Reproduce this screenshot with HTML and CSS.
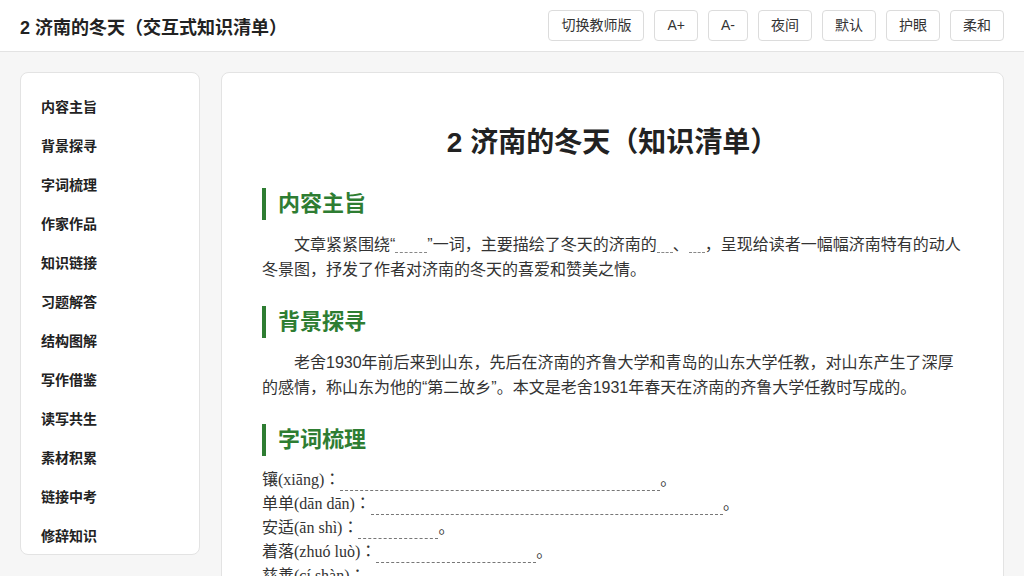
FILE: index.html
```html
<!DOCTYPE html>
<html lang="ja">
<head>
  <meta charset="UTF-8" />
  <meta name="viewport" content="width=device-width, initial-scale=1.0"/>
  <title>2 济南的冬天（交互式知识清单）</title>
  <link rel="stylesheet" href="styles.css">
</head>
<body>

<header class="topbar">
  <h1 class="page-title">2 济南的冬天（交互式知识清单）</h1>
  <div class="tools">
    <button class="tool-btn">切换教师版</button>
    <button class="tool-btn">A+</button>
    <button class="tool-btn">A-</button>
    <button class="tool-btn">夜间</button>
    <button class="tool-btn">默认</button>
    <button class="tool-btn">护眼</button>
    <button class="tool-btn">柔和</button>
  </div>
</header>

<div class="layout">
  <nav class="sidebar">
    <a href="#zhuzhi">内容主旨</a>
    <a href="#beijing">背景探寻</a>
    <a href="#zici">字词梳理</a>
    <a href="#">作家作品</a>
    <a href="#">知识链接</a>
    <a href="#">习题解答</a>
    <a href="#">结构图解</a>
    <a href="#">写作借鉴</a>
    <a href="#">读写共生</a>
    <a href="#">素材积累</a>
    <a href="#">链接中考</a>
    <a href="#">修辞知识</a>
  </nav>

  <main class="content">
    <h1 class="doc-title">2 济南的冬天（知识清单）</h1>

    <h2 id="zhuzhi" class="section-title">内容主旨</h2>
    <p class="text">文章紧紧围绕“<span class="gap gap-2"></span>”一词，主要描绘了冬天的济南的<span class="gap gap-1"></span>、<span class="gap gap-1"></span>，呈现给读者一幅幅济南特有的动人冬景图，抒发了作者对济南的冬天的喜爱和赞美之情。</p>

    <h2 id="beijing" class="section-title">背景探寻</h2>
    <p class="text">老舍1930年前后来到山东，先后在济南的齐鲁大学和青岛的山东大学任教，对山东产生了深厚的感情，称山东为他的“第二故乡”。本文是老舍1931年春天在济南的齐鲁大学任教时写成的。</p>

    <h2 id="zici" class="section-title">字词梳理</h2>
    <div class="word-list">
      <div>镶(xiāng)：<span class="blank" style="width:20em"></span>。</div>
      <div>单单(dān dān)：<span class="blank" style="width:22em"></span>。</div>
      <div>安适(ān shì)：<span class="blank" style="width:5em"></span>。</div>
      <div>着落(zhuó luò)：<span class="blank" style="width:10em"></span>。</div>
      <div>慈善(cí shàn)：<span class="blank" style="width:12em"></span>。</div>
      <div>秀气(xiù qi)：<span class="blank" style="width:14em"></span>。</div>
    </div>
  </main>
</div>

</body>
</html>
```

FILE: styles.css
```css
body {
  margin: 0;
  font-family: "Liberation Sans", "Noto Sans CJK JP", sans-serif;
  background-color: #f6f6f6;
  color: #333;
}

.topbar {
  display: flex;
  justify-content: space-between;
  align-items: center;
  height: 51px;
  padding: 0 20px;
  background-color: #fff;
  border-bottom: 1px solid #e3e3e3;
}

.page-title {
  margin: 0;
  font-size: 18px;
  font-weight: bold;
  color: #222;
}

.tools {
  display: flex;
  gap: 10px;
}

.tool-btn {
  padding: 5px 12px;
  font-family: inherit;
  font-size: 14px;
  line-height: 19px;
  color: #333;
  background-color: #fff;
  border: 1px solid #dcdcdc;
  border-radius: 4px;
  cursor: pointer;
}

.layout {
  display: flex;
  align-items: flex-start;
  gap: 21px;
  padding: 20px;
}

.sidebar {
  flex: 0 0 180px;
  box-sizing: border-box;
  height: calc(100vh - 93px);
  overflow: hidden;
  padding: 15px 0;
  background-color: #fff;
  border: 1px solid #e3e3e3;
  border-radius: 8px;
}

.sidebar a {
  display: block;
  padding: 10px 20px;
  font-size: 14px;
  line-height: 19px;
  font-weight: bold;
  color: #222;
  text-decoration: none;
}

.content {
  flex: 1;
  padding: 40px;
  background-color: #fff;
  border: 1px solid #e3e3e3;
  border-radius: 8px;
}

.doc-title {
  margin: 13px 0 28px;
  font-size: 28px;
  line-height: 34px;
  text-align: center;
  color: #222;
}

.section-title {
  margin: 24px 0 12px;
  padding-left: 12px;
  font-size: 22px;
  line-height: 32px;
  color: #2e7d32;
  border-left: 4px solid #2e7d32;
}

.text {
  margin: 0;
  font-size: 16px;
  line-height: 25px;
  text-indent: 2em;
}

.gap {
  display: inline-block;
  height: 14px;
  vertical-align: -3px;
  border-bottom: 1px dashed #888;
  text-indent: 0;
}

.gap-1 {
  width: 1em;
}

.gap-2 {
  width: 2em;
}

.word-list {
  font-family: "Liberation Serif", "Noto Sans CJK JP", serif;
  font-size: 16px;
  line-height: 24px;
}

.blank {
  display: inline-block;
  height: 16px;
  vertical-align: -6px;
  border-bottom: 1px dashed #777;
}
```
